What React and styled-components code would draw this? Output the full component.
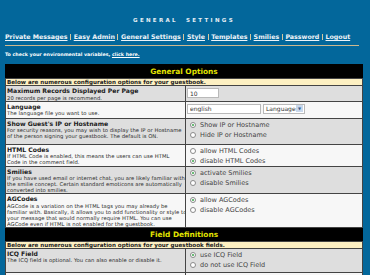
import React from "react";
import styled, { createGlobalStyle } from "styled-components";

const GlobalStyle = createGlobalStyle`
  html, body {
    margin: 0;
    padding: 0;
    background: #03679b;
  }
  body {
    font-family: "DejaVu Sans", Verdana, sans-serif;
  }
`;

const Page = styled.div`
  width: 370px;
  height: 275px;
  overflow: hidden;
  padding: 0 7px 0 5px;
  box-sizing: border-box;
`;

const Title = styled.h1`
  margin: 0;
  padding-top: 16px;
  height: 8px;
  text-align: center;
  font-size: 5.5px;
  line-height: 8px;
  letter-spacing: 2.3px;
  word-spacing: 4px;
  font-weight: bold;
  color: #e6eef4;
`;

const Nav = styled.nav`
  display: flex;
  align-items: center;
  gap: 2.6px;
  margin-top: 8px;
  width: 354px;
  padding-bottom: 3px;
  border-bottom: 1px solid #cdb98f;
  font-size: 6.3px;
  line-height: 10px;
  font-weight: bold;
`;

const NavLink = styled.a`
  color: #eef3f8;
  text-decoration: underline;
  white-space: nowrap;
`;

const Pipe = styled.span`
  display: inline-block;
  width: 1px;
  height: 6px;
  background: #d8c79f;
`;

const Note = styled.p`
  margin: 5px 0 0;
  font-size: 4.75px;
  line-height: 7px;
  font-weight: bold;
  color: #ffffff;

  a {
    color: #ffffff;
    text-decoration: underline;
  }
`;

const Table = styled.table`
  margin-top: 6px;
  width: 358px;
  border-collapse: collapse;
  border: 1px solid #000;
  table-layout: fixed;
  font-size: 6px;
`;

const HeadCell = styled.th`
  background: #000;
  color: #e4e400;
  font-size: 7.4px;
  height: 13px;
  padding: 0;
  text-align: center;
`;

const NoteCell = styled.td`
  background: #fdf0c2;
  color: #222;
  font-size: 5.6px;
  font-weight: bold;
  line-height: 6px;
  height: 6px;
  padding: 0 1px;
  border: 1px solid #444;
  white-space: nowrap;
  overflow: hidden;
`;

const Row = styled.tr`
  height: ${props => props.$h}px;
`;

const Cell = styled.td`
  background: ${props => (props.$shade ? "#dedede" : "#f7f7f7")};
  border: 1px solid #444;
  vertical-align: top;
  padding: 1px 0 0 1px;
  overflow: hidden;
`;

const Label = styled.div`
  font-size: 6.1px;
  line-height: 7.5px;
  font-weight: bold;
  color: #1a1a1a;
  white-space: nowrap;
`;

const Help = styled.div`
  font-size: 5.25px;
  letter-spacing: 0.04px;
  line-height: 6px;
  color: #2a2a2a;
  white-space: nowrap;
`;

const Field = styled.input`
  box-sizing: border-box;
  display: block;
  width: ${props => props.$w}px;
  height: 10px;
  border: 1px solid #b9b9b9;
  background: #fff;
  font-family: inherit;
  font-size: 6px;
  color: #333;
  padding: 0 2px;
  margin: 0;
`;

const Controls = styled.div`
  display: flex;
  align-items: center;
  gap: 2px;
  padding-top: 1px;
`;

const Select = styled.div`
  box-sizing: border-box;
  width: 42px;
  height: 10px;
  border: 1px solid #b9b9b9;
  background: #fff;
  display: flex;
  align-items: center;
  justify-content: space-between;
  font-size: 6px;
  color: #333;
  padding-left: 2px;
`;

const Arrow = styled.span`
  width: 7px;
  height: 7px;
  margin-right: 1px;
  background: #c9d8ec;
  color: #3a5a8a;
  font-size: 4px;
  line-height: 7px;
  text-align: center;
`;

const Choice = styled.label`
  display: flex;
  align-items: center;
  gap: 4px;
  font-size: 6.5px;
  line-height: 10px;
  color: #444;
  padding-left: 3px;
`;

const Dot = styled.span`
  box-sizing: border-box;
  width: 6px;
  height: 6px;
  border-radius: 50%;
  border: 1px solid #8a8a8a;
  background: #fff;
  display: flex;
  align-items: center;
  justify-content: center;

  &::after {
    content: "";
    width: 2px;
    height: 2px;
    border-radius: 50%;
    background: ${props => (props.$on ? "#3aa54a" : "transparent")};
  }
`;

const links = [
  "Private Messages",
  "Easy Admin",
  "General Settings",
  "Style",
  "Templates",
  "Smilies",
  "Password",
  "Logout"
];

function Radios({ options }) {
  return options.map(([text, on]) => (
    <Choice key={text}>
      <Dot $on={on} />
      {text}
    </Choice>
  ));
}

const general = [
  {
    label: "Maximum Records Displayed Per Page",
    help: ["20 records per page is recommend."],
    h: 15,
    control: (
      <Controls>
        <Field $w={32} defaultValue="10" />
      </Controls>
    )
  },
  {
    label: "Language",
    help: ["The language file you want to use."],
    h: 17,
    control: (
      <Controls>
        <Field $w={74} defaultValue="english" />
        <Select>
          Language
          <Arrow>▼</Arrow>
        </Select>
      </Controls>
    )
  },
  {
    label: "Show Guest's IP or Hostname",
    help: [
      "For security reasons, you may wish to display the IP or Hostname",
      "of the person signing your guestbook. The default is ON."
    ],
    h: 26,
    control: (
      <Radios
        options={[
          ["Show IP or Hostname", true],
          ["Hide IP or Hostname", false]
        ]}
      />
    )
  },
  {
    label: "HTML Codes",
    help: [
      "If HTML Code is enabled, this means the users can use HTML",
      "Code in the comment field."
    ],
    h: 21,
    control: (
      <Radios
        options={[
          ["allow HTML Codes", false],
          ["disable HTML Codes", true]
        ]}
      />
    )
  },
  {
    label: "Smilies",
    help: [
      "If you have used email or internet chat, you are likely familiar with",
      "the smilie concept. Certain standard emoticons are automatically",
      "converted into smilies."
    ],
    h: 26,
    control: (
      <Radios
        options={[
          ["activate Smilies", true],
          ["disable Smilies", false]
        ]}
      />
    )
  },
  {
    label: "AGCodes",
    help: [
      "AGCode is a variation on the HTML tags you may already be",
      "familiar with. Basically, it allows you to add functionality or style to",
      "your message that would normally require HTML. You can use",
      "AGCode even if HTML is not enabled for the guestbook."
    ],
    h: 32,
    control: (
      <Radios
        options={[
          ["allow AGCodes", true],
          ["disable AGCodes", false]
        ]}
      />
    )
  }
];

const fields = [
  {
    label: "ICQ Field",
    help: ["The ICQ field is optional. You can also enable or disable it."],
    h: 24,
    control: (
      <Radios
        options={[
          ["use ICQ Field", true],
          ["do not use ICQ Field", false]
        ]}
      />
    )
  },
  {
    label: "AIM Field",
    help: ["The AIM field is optional. You can also enable or disable it."],
    h: 24,
    control: (
      <Radios
        options={[
          ["use AIM Field", true],
          ["do not use AIM Field", false]
        ]}
      />
    )
  }
];

function Section({ title, note, rows }) {
  return (
    <>
      <tr>
        <HeadCell colSpan={2}>{title}</HeadCell>
      </tr>
      <tr>
        <NoteCell colSpan={2}>{note}</NoteCell>
      </tr>
      {rows.map((row, i) => (
        <Row key={row.label} $h={row.h}>
          <Cell $shade={i % 2 === 0}>
            <Label>{row.label}</Label>
            {row.help.map(line => (
              <Help key={line}>{line}</Help>
            ))}
          </Cell>
          <Cell $shade={i % 2 === 0}>{row.control}</Cell>
        </Row>
      ))}
    </>
  );
}

export default function App() {
  return (
    <Page>
      <GlobalStyle />
      <Title>GENERAL SETTINGS</Title>
      <Nav>
        {links.map((l, i) => (
          <React.Fragment key={l}>
            {i > 0 && <Pipe />}
            <NavLink href="#">{l}</NavLink>
          </React.Fragment>
        ))}
      </Nav>
      <Note>
        To check your environmental variables, <a href="#">click here.</a>
      </Note>
      <Table>
        <colgroup>
          <col style={{ width: 180 }} />
          <col />
        </colgroup>
        <tbody>
          <Section
            title="General Options"
            note="Below are numerous configuration options for your guestbook."
            rows={general}
          />
          <Section
            title="Field Definitions"
            note="Below are numerous configuration options for your guestbook fields."
            rows={fields}
          />
        </tbody>
      </Table>
    </Page>
  );
}
